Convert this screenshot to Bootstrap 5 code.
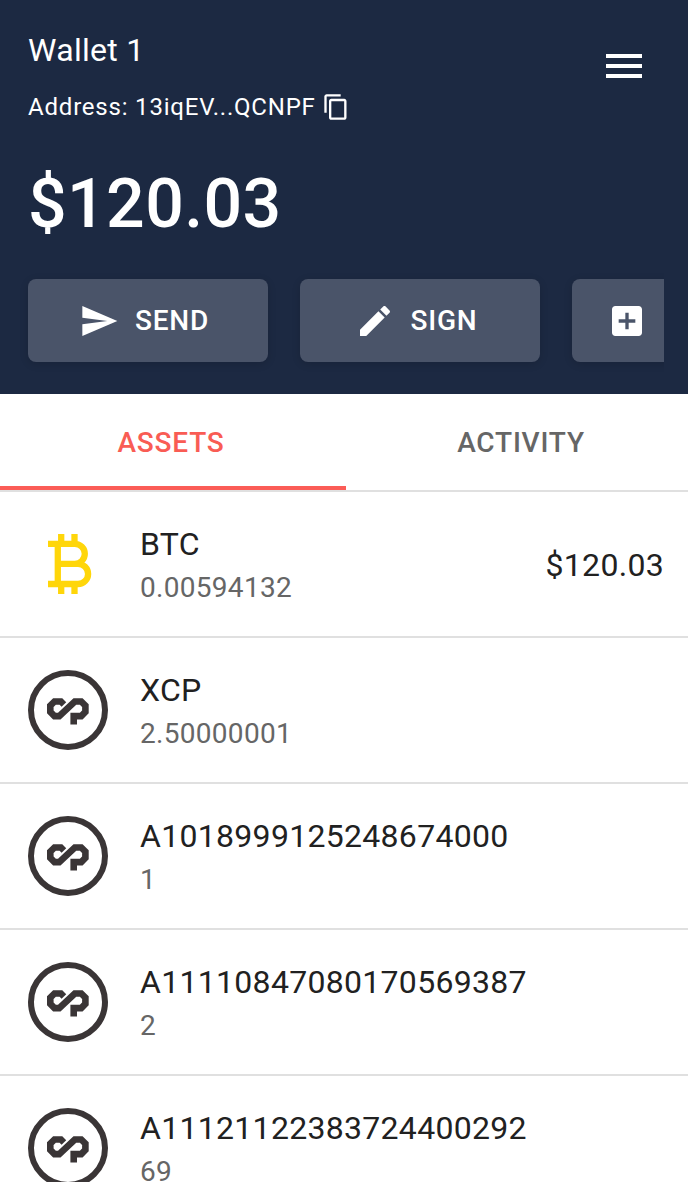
<!DOCTYPE html>
<html lang="en">
<head>
<meta charset="utf-8">
<meta name="viewport" content="width=device-width, initial-scale=1">
<title>Wallet</title>
<link href="https://cdn.jsdelivr.net/npm/bootstrap@5.3.0/dist/css/bootstrap.min.css" rel="stylesheet">
<style>
body{font-family:Roboto,"Liberation Sans",sans-serif;height:1182px;overflow:hidden;color:#212121;background:#fff}
svg{display:block;flex:none}
.wallet-head{height:394px;background:#1c2942;padding:26px 24px 0 28px;overflow:hidden}
.wallet-name{font-size:32px;line-height:48px;letter-spacing:.3px}
.wallet-addr{font-size:24px;line-height:40px;letter-spacing:.8px;margin-top:13px;gap:6px}
.wallet-total{font-size:68px;line-height:84px;font-weight:500;letter-spacing:.4px;margin-top:35px}
.menu-btn{margin:16px 16px 0 0}
.actions{gap:32px;margin:-17px -24px 0 -28px;padding:50px 0 40px 28px;width:664px;overflow:hidden}
.action-btn{flex:none;width:240px;height:83px;border-radius:8px;border:0;padding:0 14px 0 6px;background:#4a5469;color:#fff;font-size:28px;font-weight:500;letter-spacing:.8px;gap:16px;box-shadow:0 2px 8px rgba(0,0,0,.14)}
.action-sign{gap:15px;padding-right:13px}
.action-add{padding-left:35px}
.tab-bar{height:98px;border-bottom:2px solid #e0e0e0}
.tab-bar .nav-link{flex:0 0 346px;height:96px;padding:1px 4px 0 0;line-height:96px;text-align:center;font-size:28px;font-weight:500;letter-spacing:.8px;color:#666;border-radius:0}
.tab-bar .nav-link:last-child{padding-left:8px}
.tab-bar .nav-link.active{color:#f95c54;border-bottom:4px solid #fb5c57}
.list-group-flush>.asset,.list-group-flush>.asset:last-child{height:146px;padding:0 24px 0 28px;border-width:0 0 2px;border-color:#e0e0e0;border-radius:0;gap:32px;color:#212121}
.asset-name,.asset-value{font-size:32px;line-height:48px;letter-spacing:.3px}
.asset-value{padding-top:1px}
.asset-qty{font-size:28px;line-height:40px;letter-spacing:.3px;color:#666}
</style>
</head>
<body>
<svg width="0" height="0" class="position-absolute">
<symbol id="cp" viewBox="0 0 80 80"><circle cx="40" cy="40" r="37" fill="none" stroke="#3a3536" stroke-width="6"/><path d="M35.900 34.500L32.900 31.500H26.500L22.300 35.700V41.900L26.500 46.100H31.200L46.800 31.500H53.200L57.400 35.700V41.900L53.200 46.100H45.700V54.500" fill="none" stroke="#3a3536" stroke-width="6.600"/></symbol>
</svg>
<header class="wallet-head text-white">
<div class="d-flex justify-content-between align-items-start">
<div>
<div class="wallet-name">Wallet 1</div>
<div class="wallet-addr d-flex align-items-center"><span>Address: 13iqEV...QCNPF</span>
<svg width="28" height="28" viewBox="0 0 24 24" fill="currentColor"><path d="M16 1H4c-1.100 0-2 .9-2 2v14h2V3h12V1zm3 4H8c-1.100 0-2 .9-2 2v14c0 1.100.9 2 2 2h11c1.100 0 2-.9 2-2V7c0-1.100-.9-2-2-2zm0 16H8V7h11v14z"/></svg></div>
</div>
<svg class="menu-btn" width="48" height="48" viewBox="0 0 24 24" fill="currentColor"><path d="M3 18h18v-2H3v2zm0-5h18v-2H3v2zm0-7v2h18V6H3z"/></svg>
</div>
<div class="wallet-total">$120.03</div>
<div class="actions d-flex">
<button class="action-btn d-flex align-items-center justify-content-center"><svg width="40" height="40" viewBox="0 0 24 24" fill="currentColor"><path d="M2.010 21L23 12 2.010 3 2 10l15 2-15 2z"/></svg>SEND</button>
<button class="action-btn action-sign d-flex align-items-center justify-content-center"><svg width="40" height="40" viewBox="0 0 24 24" fill="currentColor"><path d="M3 17.250V21h3.750L17.810 9.940l-3.750-3.750L3 17.250zM20.710 7.040c.39-.39.39-1.020 0-1.410l-2.340-2.340c-.39-.39-1.020-.39-1.410 0l-1.830 1.830 3.750 3.750 1.830-1.830z"/></svg>SIGN</button>
<button class="action-btn action-add d-flex align-items-center"><svg width="40" height="40" viewBox="0 0 24 24" fill="currentColor"><path d="M19 3H5c-1.110 0-2 .9-2 2v14c0 1.100.89 2 2 2h14c1.100 0 2-.9 2-2V5c0-1.100-.9-2-2-2zm-2 10h-4v4h-2v-4H7v-2h4V7h2v4h4v2z"/></svg></button>
</div>
</header>
<nav class="tab-bar nav flex-nowrap">
<a class="nav-link active" href="#">ASSETS</a>
<a class="nav-link" href="#">ACTIVITY</a>
</nav>
<div class="list-group list-group-flush">
<div class="asset list-group-item d-flex align-items-center"><svg width="80" height="80" viewBox="0 0 80 80" fill="none" stroke="#ffd60a" stroke-width="6.300"><path d="M20 19.800H46.800a10 10 0 0 1 0 20H30M46.800 39.800H50a10.100 10.100 0 0 1 0 20.200H20M29.800 19.800V60M33.200 10v9M46.500 10v9M33.200 61v9M46.500 61v9"/></svg>
<div class="flex-grow-1"><div class="asset-name">BTC</div><div class="asset-qty">0.00594132</div></div><div class="asset-value">$120.03</div></div>
<div class="asset list-group-item d-flex align-items-center"><svg width="80" height="80"><use href="#cp"/></svg><div><div class="asset-name">XCP</div><div class="asset-qty">2.50000001</div></div></div>
<div class="asset list-group-item d-flex align-items-center"><svg width="80" height="80"><use href="#cp"/></svg><div><div class="asset-name">A1018999125248674000</div><div class="asset-qty">1</div></div></div>
<div class="asset list-group-item d-flex align-items-center"><svg width="80" height="80"><use href="#cp"/></svg><div><div class="asset-name">A11110847080170569387</div><div class="asset-qty">2</div></div></div>
<div class="asset list-group-item d-flex align-items-center"><svg width="80" height="80"><use href="#cp"/></svg><div><div class="asset-name">A11121122383724400292</div><div class="asset-qty">69</div></div></div>
</div>
<script src="https://cdn.jsdelivr.net/npm/bootstrap@5.3.0/dist/js/bootstrap.bundle.min.js"></script>
</body>
</html>
